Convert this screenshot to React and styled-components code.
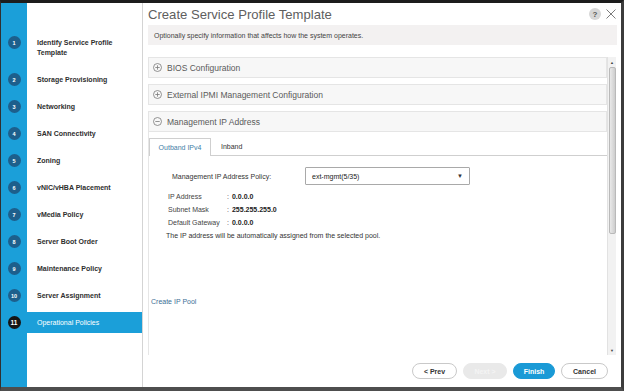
import React from 'react';
import styled, { createGlobalStyle } from 'styled-components';

const GlobalStyle = createGlobalStyle`
  html, body {
    margin: 0;
    padding: 0;
    background: #2a2a2a;
  }
  * {
    box-sizing: border-box;
  }
`;

const FONT = `"Liberation Sans", Arial, sans-serif`;

const Frame = styled.div`
  width: 624px;
  height: 391px;
  display: flex;
  border-top: 3px solid #1c1c1c;
  border-right: 3px solid #3c3c3c;
  border-bottom: 4px solid #4e4e4e;
  border-left: 1px solid #303030;
  font-family: ${FONT};
  background: #fff;
`;

const Sidebar = styled.div`
  width: 142px;
  flex: none;
  padding-top: 26px;
  background: linear-gradient(to right, #1b9fd9 26px, #fff 26px);
  border-right: 1px solid #d4d4d4;
`;

const Step = styled.div`
  display: flex;
  align-items: flex-start;
  padding: 3px 0;
`;

const BadgeCell = styled.div`
  width: 26px;
  flex: none;
  display: flex;
  justify-content: center;
  padding-top: 4px;
`;

const Badge = styled.div`
  width: 13px;
  height: 13px;
  border-radius: 50%;
  background: ${(p) => (p.$active ? '#151515' : '#1d5f8c')};
  color: #fff;
  font-size: ${(p) => (p.$active ? '6.5px' : '5.5px')};
  font-weight: bold;
  display: flex;
  align-items: center;
  justify-content: center;
`;

const StepLabel = styled.div`
  flex: 1;
  padding: 5.5px 4px 5.5px 10px;
  line-height: 10px;
  font-size: 7px;
  color: ${(p) => (p.$active ? '#fff' : '#2e2e2e')};
  background: ${(p) => (p.$active ? '#1b9fd9' : 'transparent')};
  font-weight: ${(p) => (p.$active ? 'normal' : 'bold')};
`;

const Main = styled.div`
  flex: 1;
  display: flex;
  flex-direction: column;
  padding: 0 4px 0 5px;
  min-width: 0;
`;

const Header = styled.div`
  height: 22px;
  display: flex;
  align-items: center;
  justify-content: space-between;
`;

const Title = styled.div`
  font-size: 13.1px;
  color: #5e5e5e;
`;

const HeaderTools = styled.div`
  display: flex;
  align-items: center;
  gap: 5px;
  padding-right: 1px;
`;

const HelpButton = styled.div`
  width: 12px;
  height: 12px;
  border-radius: 50%;
  background: #d7d7d7;
  color: #555;
  font-size: 8px;
  font-weight: bold;
  display: flex;
  align-items: center;
  justify-content: center;
`;

const Intro = styled.div`
  height: 20px;
  background: #f3f1f1;
  display: flex;
  align-items: center;
  padding-left: 6px;
  font-size: 7px;
  color: #444;
`;

const ScrollArea = styled.div`
  margin-top: 12px;
  height: 298px;
  display: flex;
  margin-right: 1px;
`;

const Content = styled.div`
  flex: 1;
  display: flex;
  flex-direction: column;
  gap: 6px;
  overflow: hidden;
`;

const Panel = styled.div`
  display: flex;
  flex-direction: column;
  flex: ${(p) => (p.$open ? 1 : 'none')};
`;

const PanelHeader = styled.div`
  height: 21px;
  flex: none;
  display: flex;
  align-items: center;
  gap: 5px;
  padding-left: 4px;
  background: #f7f7f7;
  border: 1px solid #e5e5e5;
  font-size: 8.5px;
  color: #5a5a5a;
`;

const PanelBody = styled.div`
  flex: 1;
  border-left: 1px solid #e6e6e6;
  padding-top: 6px;
`;

const Tabs = styled.div`
  display: flex;
  height: 18px;
  border-bottom: 1px solid #cfcfcf;
`;

const Tab = styled.div`
  width: ${(p) => (p.$active ? '62px' : 'auto')};
  padding-left: ${(p) => (p.$active ? 0 : '10px')};
  text-align: ${(p) => (p.$active ? 'center' : 'left')};
  line-height: 17px;
  font-size: 7px;
  color: ${(p) => (p.$active ? '#3f7ea6' : '#333')};
  background: #fff;
  border: ${(p) => (p.$active ? '1px solid #cfcfcf' : 'none')};
  border-bottom: none;
  margin-bottom: ${(p) => (p.$active ? '-1px' : 0)};
`;

const PolicyRow = styled.div`
  display: flex;
  align-items: center;
  margin-top: 11px;
  padding-left: 23px;
  font-size: 7px;
  color: #333;
`;

const PolicyLabel = styled.div`
  width: 133px;
`;

const Select = styled.div`
  width: 165px;
  height: 18px;
  border: 1px solid #a9a9a9;
  border-radius: 1px;
  display: flex;
  align-items: center;
  justify-content: space-between;
  padding: 0 6px 0 6px;
  font-size: 7px;
  color: #222;
`;

const Caret = styled.span`
  font-size: 6px;
  color: #333;
`;

const Details = styled.div`
  margin-top: 5px;
  padding-left: 19px;
`;

const DetailRow = styled.div`
  display: flex;
  line-height: 13px;
  font-size: 7px;
  color: #444;
`;

const DetailLabel = styled.div`
  width: 59px;
`;

const DetailValue = styled.div`
  font-weight: bold;
  color: #222;
  padding-left: 3px;
`;

const Note = styled.div`
  padding-left: 17px;
  line-height: 13px;
  font-size: 7px;
  color: #333;
`;

const PoolLink = styled.div`
  margin-top: 54px;
  padding-left: 2px;
  line-height: 12px;
  font-size: 7px;
  color: #3d6f96;
`;

const Scrollbar = styled.div`
  width: 9px;
  flex: none;
  display: flex;
  flex-direction: column;
  align-items: center;
  background: #f2f2f2;
  border-left: 1px solid #e2e2e2;
`;

const Arrow = styled.div`
  height: 10px;
  display: flex;
  align-items: center;
  font-size: 4px;
  color: #444;
`;

const Thumb = styled.div`
  width: 7px;
  height: 167px;
  border: 1px solid #b9b9b9;
  border-radius: 2px;
  background: linear-gradient(to right, #e9e9e9, #cdcdcd);
`;

const Spacer = styled.div`
  flex: 1;
`;

const Footer = styled.div`
  flex: 1;
  display: flex;
  align-items: center;
  justify-content: flex-end;
  gap: 6px;
  padding-right: 9px;
`;

const Button = styled.div`
  width: ${(p) => p.$w}px;
  height: 16px;
  border-radius: 8px;
  display: flex;
  align-items: center;
  justify-content: center;
  font-size: 7px;
  font-weight: bold;
  color: ${(p) => (p.$primary ? '#fff' : p.$disabled ? '#f4f4f4' : '#333')};
  background: ${(p) => (p.$primary ? '#1a9ad6' : p.$disabled ? '#e9e9e9' : '#fff')};
  border: 1px solid ${(p) => (p.$primary ? '#1a9ad6' : p.$disabled ? '#e9e9e9' : '#c9c9c9')};
`;

const steps = [
  'Identify Service Profile Template',
  'Storage Provisioning',
  'Networking',
  'SAN Connectivity',
  'Zoning',
  'vNIC/vHBA Placement',
  'vMedia Policy',
  'Server Boot Order',
  'Maintenance Policy',
  'Server Assignment',
  'Operational Policies',
];

const CircleSign = ({ minus }) => (
  <svg width="9" height="9" viewBox="0 0 9 9">
    <circle cx="4.5" cy="4.5" r="4" fill="none" stroke="#7a7a7a" strokeWidth="0.8" />
    <line x1="2.3" y1="4.5" x2="6.7" y2="4.5" stroke="#7a7a7a" strokeWidth="0.8" />
    {!minus && <line x1="4.5" y1="2.3" x2="4.5" y2="6.7" stroke="#7a7a7a" strokeWidth="0.8" />}
  </svg>
);

const CloseIcon = () => (
  <svg width="10" height="10" viewBox="0 0 10 10">
    <path d="M0.5 0.5 L9.5 9.5 M9.5 0.5 L0.5 9.5" stroke="#7c7c7c" strokeWidth="1" />
  </svg>
);

export default function App() {
  return (
    <>
      <GlobalStyle />
      <Frame>
        <Sidebar>
          {steps.map((s, i) => {
            const active = i === steps.length - 1;
            return (
              <Step key={s}>
                <BadgeCell>
                  <Badge $active={active}>{i + 1}</Badge>
                </BadgeCell>
                <StepLabel $active={active}>
                  {i === 0 ? (
                    <>
                      Identify Service Profile
                      <br />
                      Template
                    </>
                  ) : (
                    s
                  )}
                </StepLabel>
              </Step>
            );
          })}
        </Sidebar>
        <Main>
          <Header>
            <Title>Create Service Profile Template</Title>
            <HeaderTools>
              <HelpButton>?</HelpButton>
              <CloseIcon />
            </HeaderTools>
          </Header>
          <Intro>Optionally specify information that affects how the system operates.</Intro>
          <ScrollArea>
            <Content>
              <Panel>
                <PanelHeader>
                  <CircleSign />
                  BIOS Configuration
                </PanelHeader>
              </Panel>
              <Panel>
                <PanelHeader>
                  <CircleSign />
                  External IPMI Management Configuration
                </PanelHeader>
              </Panel>
              <Panel $open>
                <PanelHeader>
                  <CircleSign minus />
                  Management IP Address
                </PanelHeader>
                <PanelBody>
                  <Tabs>
                    <Tab $active>Outband IPv4</Tab>
                    <Tab>Inband</Tab>
                  </Tabs>
                  <PolicyRow>
                    <PolicyLabel>Management IP Address Policy:</PolicyLabel>
                    <Select>
                      ext-mgmt(5/35)
                      <Caret>▼</Caret>
                    </Select>
                  </PolicyRow>
                  <Details>
                    <DetailRow>
                      <DetailLabel>IP Address</DetailLabel>:
                      <DetailValue>0.0.0.0</DetailValue>
                    </DetailRow>
                    <DetailRow>
                      <DetailLabel>Subnet Mask</DetailLabel>:
                      <DetailValue>255.255.255.0</DetailValue>
                    </DetailRow>
                    <DetailRow>
                      <DetailLabel>Default Gateway</DetailLabel>:
                      <DetailValue>0.0.0.0</DetailValue>
                    </DetailRow>
                  </Details>
                  <Note>The IP address will be automatically assigned from the selected pool.</Note>
                  <PoolLink>Create IP Pool</PoolLink>
                </PanelBody>
              </Panel>
            </Content>
            <Scrollbar>
              <Arrow>▲</Arrow>
              <Thumb />
              <Spacer />
              <Arrow>▼</Arrow>
            </Scrollbar>
          </ScrollArea>
          <Footer>
            <Button $w={45}>&lt; Prev</Button>
            <Button $w={44} $disabled>Next &gt;</Button>
            <Button $w={42} $primary>Finish</Button>
            <Button $w={47}>Cancel</Button>
          </Footer>
        </Main>
      </Frame>
    </>
  );
}
